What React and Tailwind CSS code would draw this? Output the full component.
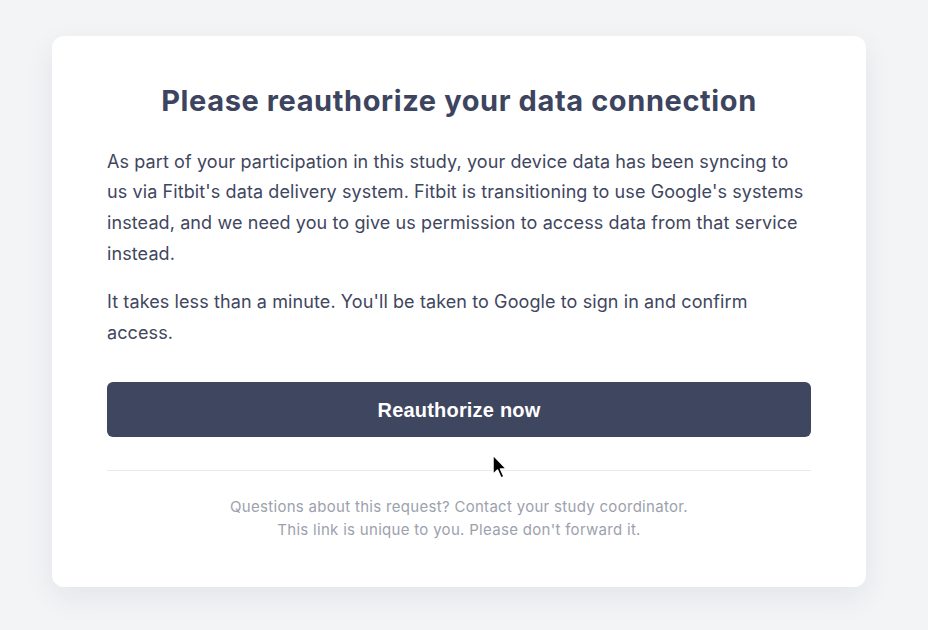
import React from "react";

function Cursor() {
  return (
    <svg className="absolute left-[491px] top-[453px]" width="18" height="28" viewBox="0 0 18 28">
      <path
        d="M2 2 L2 21.5 L6.5 17 L10 25 L13 23.7 L9.5 16 L15.5 16 Z"
        fill="#000"
        stroke="#fff"
        strokeWidth="1.5"
        strokeLinejoin="round"
      />
    </svg>
  );
}

export default function App() {
  return (
    <div className="relative min-h-[630px] bg-[#f3f4f6] pt-[36px] font-['Inter',sans-serif]">
      <div className="ml-[52px] w-[814px] rounded-xl bg-white px-[55px] pt-12 pb-[46px] shadow-[0_10px_30px_rgba(17,24,39,0.07)]">
        <h1 className="text-center text-[29px] font-bold leading-[1.2] tracking-[0.6px] text-[#3d4460]">
          Please reauthorize your data connection
        </h1>
        <p className="mt-7 text-[18px] leading-[1.7] tracking-[0.1px] text-[#3f4660]">
          As part of your participation in this study, your device data has been syncing to us via Fitbit's data
          delivery system. Fitbit is transitioning to use Google's systems instead, and we need you to give us
          permission to access data from that service instead.
        </p>
        <p className="mt-[18px] text-[18px] leading-[1.7] tracking-[0.1px] text-[#3f4660]">
          It takes less than a minute. You'll be taken to Google to sign in and confirm access.
        </p>
        <button className="mt-[34px] flex h-[55px] w-full items-center justify-center rounded-md bg-[#3f4660] font-['Liberation_Sans',Arial,sans-serif] text-[20px] font-bold tracking-[0.2px] text-white">
          Reauthorize now
        </button>
        <div className="mt-[33px] border-t border-[#e8eaee]" />
        <div className="mt-[24px] text-center text-[15px] leading-[23px] tracking-[0.3px] text-[#9ca1ad]">
          <p>Questions about this request? Contact your study coordinator.</p>
          <p>This link is unique to you. Please don't forward it.</p>
        </div>
      </div>
      <Cursor />
    </div>
  );
}
